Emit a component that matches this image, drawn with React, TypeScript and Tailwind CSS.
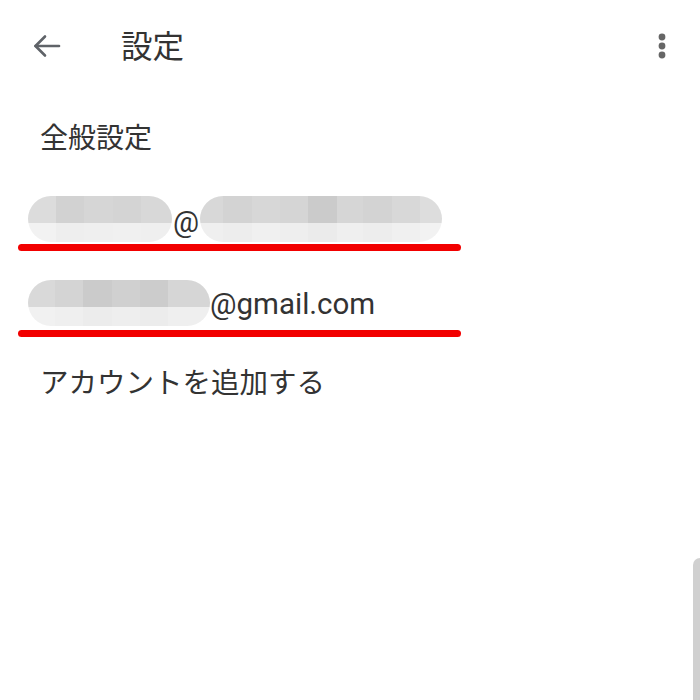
import React from "react";

type Cell = { w: number; top: string; bot: string };

function Blob({ cells, className = "" }: { cells: Cell[]; className?: string }) {
  return (
    <div className={"flex h-[46px] rounded-[23px] overflow-hidden " + className}>
      {cells.map((c, i) => (
        <div key={i} className="flex flex-col" style={{ width: c.w }}>
          <div className="h-[27px]" style={{ background: c.top }} />
          <div className="flex-1" style={{ background: c.bot }} />
        </div>
      ))}
    </div>
  );
}

const blob1: Cell[] = [
  { w: 28, top: "#dcdcdc", bot: "#f2f2f2" },
  { w: 28, top: "#d2d2d2", bot: "#eeeeee" },
  { w: 29, top: "#d6d6d6", bot: "#efefef" },
  { w: 28, top: "#d4d4d4", bot: "#f0f0f0" },
  { w: 31, top: "#d8d8d8", bot: "#efefef" },
];

const blob2: Cell[] = [
  { w: 23, top: "#d8d8d8", bot: "#efefef" },
  { w: 29, top: "#d3d3d3", bot: "#ededed" },
  { w: 28, top: "#d7d7d7", bot: "#f0f0f0" },
  { w: 28, top: "#d5d5d5", bot: "#eeeeee" },
  { w: 29, top: "#cbcbcb", bot: "#ebebeb" },
  { w: 26, top: "#d6d6d6", bot: "#efefef" },
  { w: 29, top: "#d3d3d3", bot: "#ededed" },
  { w: 28, top: "#d8d8d8", bot: "#f0f0f0" },
  { w: 22, top: "#dddddd", bot: "#f2f2f2" },
];

const blob3: Cell[] = [
  { w: 27, top: "#d9d9d9", bot: "#f1f1f1" },
  { w: 28, top: "#d4d4d4", bot: "#efefef" },
  { w: 29, top: "#cbcbcb", bot: "#ececec" },
  { w: 28, top: "#d0d0d0", bot: "#eeeeee" },
  { w: 28, top: "#cccccc", bot: "#ececec" },
  { w: 42, top: "#d6d6d6", bot: "#efefef" },
];

export default function App() {
  return (
    <div className="relative w-[700px] h-[700px] bg-white overflow-hidden text-[#333333] font-['Noto_Sans_CJK_JP',sans-serif]">
      <div className="flex h-[92px] items-center">
        <div className="ml-[33px] w-[28px] flex items-center">
          <svg width="28" height="24" viewBox="0 0 28 24" fill="none" stroke="#5f6368" strokeWidth="2.6" strokeLinecap="round" strokeLinejoin="round">
            <path d="M26 12H2.5" />
            <path d="M12 2.5L2.5 12L12 21.5" />
          </svg>
        </div>
        <span className="ml-[60px] mb-[3px] text-[31.5px] leading-none">設定</span>
        <div className="ml-auto mr-[34px] flex">
          <svg width="8" height="28" viewBox="0 0 8 28" fill="#666666">
            <circle cx="4" cy="5" r="3.4" />
            <circle cx="4" cy="14" r="3.4" />
            <circle cx="4" cy="23" r="3.4" />
          </svg>
        </div>
      </div>

      <div className="flex h-[88px] items-center pl-[40px] text-[28px] leading-none">全般設定</div>

      <div className="mt-[16px] flex items-center ml-[28px]">
        <Blob cells={blob1} />
        <span className="font-['Roboto',sans-serif] text-[29px] leading-none mt-[6px] ml-[1px] w-[27px]">@</span>
        <Blob cells={blob2} />
      </div>
      <div className="mt-[2px] ml-[18px] w-[443px] h-[7px] rounded-full bg-[#f20000]" />

      <div className="mt-[29px] flex items-center ml-[28px]">
        <Blob cells={blob3} />
        <span className="font-['Roboto',sans-serif] text-[29.5px] leading-none mt-[4px]">@gmail.com</span>
      </div>
      <div className="mt-[4px] ml-[18px] w-[443px] h-[7px] rounded-full bg-[#f20000]" />

      <div className="mt-[30px] pl-[40px] text-[28.5px] leading-none">アカウントを追加する</div>

      <div className="absolute right-0 top-[558px] w-[7px] h-[142px] rounded-tl-[8px] bg-[#d0d0d0]" />
    </div>
  );
}
